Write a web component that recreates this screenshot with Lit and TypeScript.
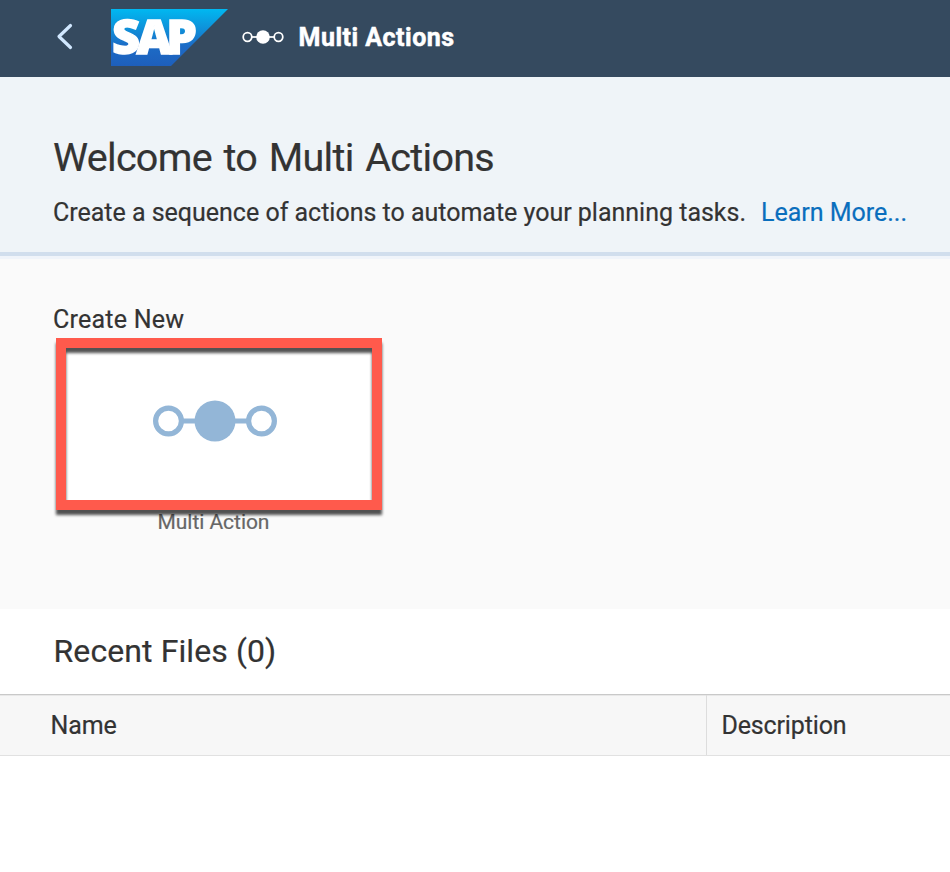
import { LitElement, html, css, svg } from "lit";
import { customElement } from "lit/decorators.js";

@customElement("multi-action-icon")
class MultiActionIcon extends LitElement {
  static styles = css`
    :host { display: block; }
    svg { display: block; width: 100%; height: 100%; overflow: visible; }
  `;
  render() {
    return html`<svg viewBox="0 0 124 42" fill="none" stroke="currentColor" stroke-width="5.2">
      ${svg`<circle cx="15.5" cy="21" r="12.9"/>
      <circle cx="108.5" cy="21" r="12.9"/>
      <circle cx="62" cy="21" r="20.5" fill="currentColor" stroke="none"/>
      <path d="M28 21H96"/>`}
    </svg>`;
  }
}

@customElement("app-root")
class AppRoot extends LitElement {
  static styles = css`
    :host {
      display: flex;
      flex-direction: column;
      height: 872px;
      overflow: hidden;
      background: #fff;
      color: #333;
      font-family: Roboto, "Noto Sans", sans-serif;
      white-space: nowrap;
      -webkit-text-stroke: 0.2px currentColor;
    }
    * { box-sizing: border-box; }
    h1, h2, h3, p { margin: 0; font-weight: 400; }
    .shell {
      display: flex;
      height: 77px;
      flex: none;
      padding-left: 56px;
      background: #354a5f;
      color: #fff;
    }
    .back { width: 18px; height: 28px; margin-top: 23px; }
    .logo { width: 117px; height: 57px; margin: 9px 0 0 37px; overflow: visible; }
    .logo text {
      font: 800 48.5px "Open Sans", "Liberation Sans", sans-serif;
      fill: #fff;
      stroke: #fff;
      stroke-width: 1.4px;
    }
    .shell multi-action-icon { width: 42px; height: 14px; margin: 29.5px 0 0 14px; }
    .title { margin-left: 14.5px; font-size: 25px; font-weight: 700; line-height: 75px; letter-spacing: 0.5px; -webkit-text-stroke: 0.5px currentColor; }
    .hero {
      flex: none;
      height: 179px;
      padding: 56px 0 0 53px;
      background: #eff4f8;
      border-bottom: 4px solid #d1deed;
    }
    .hero h1 { font-size: 39.5px; line-height: 50px; letter-spacing: -0.7px; word-spacing: 2.5px; }
    .intro { display: flex; gap: 15px; margin-top: 14px; font-size: 25px; line-height: 31px; letter-spacing: -0.01px; }
    .link { color: #0a6ebd; }
    .create {
      flex: none;
      height: 353px;
      padding: 44px 0 0 53px;
      background: #fafafa;
      border-top: 3px solid #f0f4fa;
    }
    .create h3 { height: 35px; font-size: 25px; line-height: 33px; letter-spacing: 0.25px; }
    .card { position: relative; width: 328px; margin-left: 3px; }
    .tile {
      display: flex;
      width: 326px;
      height: 172px;
      padding: 62px 0 0 97.4px;
      background: #fff;
    }
    .tile multi-action-icon { width: 124px; height: 42px; color: #93b6d7; }
    .label { width: 315px; text-align: center; font-size: 21px; line-height: 25px; letter-spacing: -0.05px; color: #666; }
    .frame {
      position: absolute;
      top: 0;
      left: 0;
      width: 326px;
      height: 172px;
      border: 10px solid #ff5a4c;
      filter: drop-shadow(0 5px 1.8px rgba(0, 0, 0, 0.68));
    }
    .recent {
      flex: none;
      height: 85px;
      padding: 22px 0 0 53.5px;
      font-size: 32px;
      line-height: 40px;
      letter-spacing: 0.1px;
    }
    .columns {
      flex: none;
      display: grid;
      grid-template-columns: 707px 1fr;
      height: 62px;
      background: #f7f7f7;
      border-top: 1px solid #c9c9c9;
      border-bottom: 1px solid #e1e1e1;
      box-shadow: inset 0 1px #e8e8e8;
      font-size: 25px;
      line-height: 62px;
      letter-spacing: -0.15px;
    }
    .name { height: 60px; padding-left: 50.5px; border-right: 1px solid #ddd; }
    .desc { height: 60px; padding-left: 14.5px; }
  `;

  render() {
    return html`
      <header class="shell">
        <svg class="back" viewBox="0 0 18 28" fill="none" stroke="#d1e8ff" stroke-width="3.2" stroke-linecap="round" stroke-linejoin="round">
          <path d="M14.5 2.5L3 13.5L14.5 24.5"/>
        </svg>
        <svg class="logo" viewBox="0 0 117 57">
          <defs>
            <linearGradient id="sky" x1="0" y1="0" x2="0" y2="1">
              <stop offset="0" stop-color="#00b8f1"/>
              <stop offset="0.3" stop-color="#0d96dc"/>
              <stop offset="0.65" stop-color="#1c6bc6"/>
              <stop offset="1" stop-color="#1e5fbb"/>
            </linearGradient>
          </defs>
          <path d="M0 0H117L60 57H0Z" fill="url(#sky)"/>
          <text x="1 25.5 55.3" y="45">SAP</text>
        </svg>
        <multi-action-icon></multi-action-icon>
        <div class="title">Multi Actions</div>
      </header>
      <section class="hero">
        <h1>Welcome to Multi Actions</h1>
        <div class="intro">
          <p>Create a sequence of actions to automate your planning tasks.</p>
          <a class="link">Learn More...</a>
        </div>
      </section>
      <section class="create">
        <h3>Create New</h3>
        <div class="card">
          <div class="tile"><multi-action-icon></multi-action-icon></div>
          <div class="label">Multi Action</div>
          <div class="frame"></div>
        </div>
      </section>
      <h2 class="recent">Recent Files (0)</h2>
      <div class="columns">
        <div class="name">Name</div>
        <div class="desc">Description</div>
      </div>
    `;
  }
}
